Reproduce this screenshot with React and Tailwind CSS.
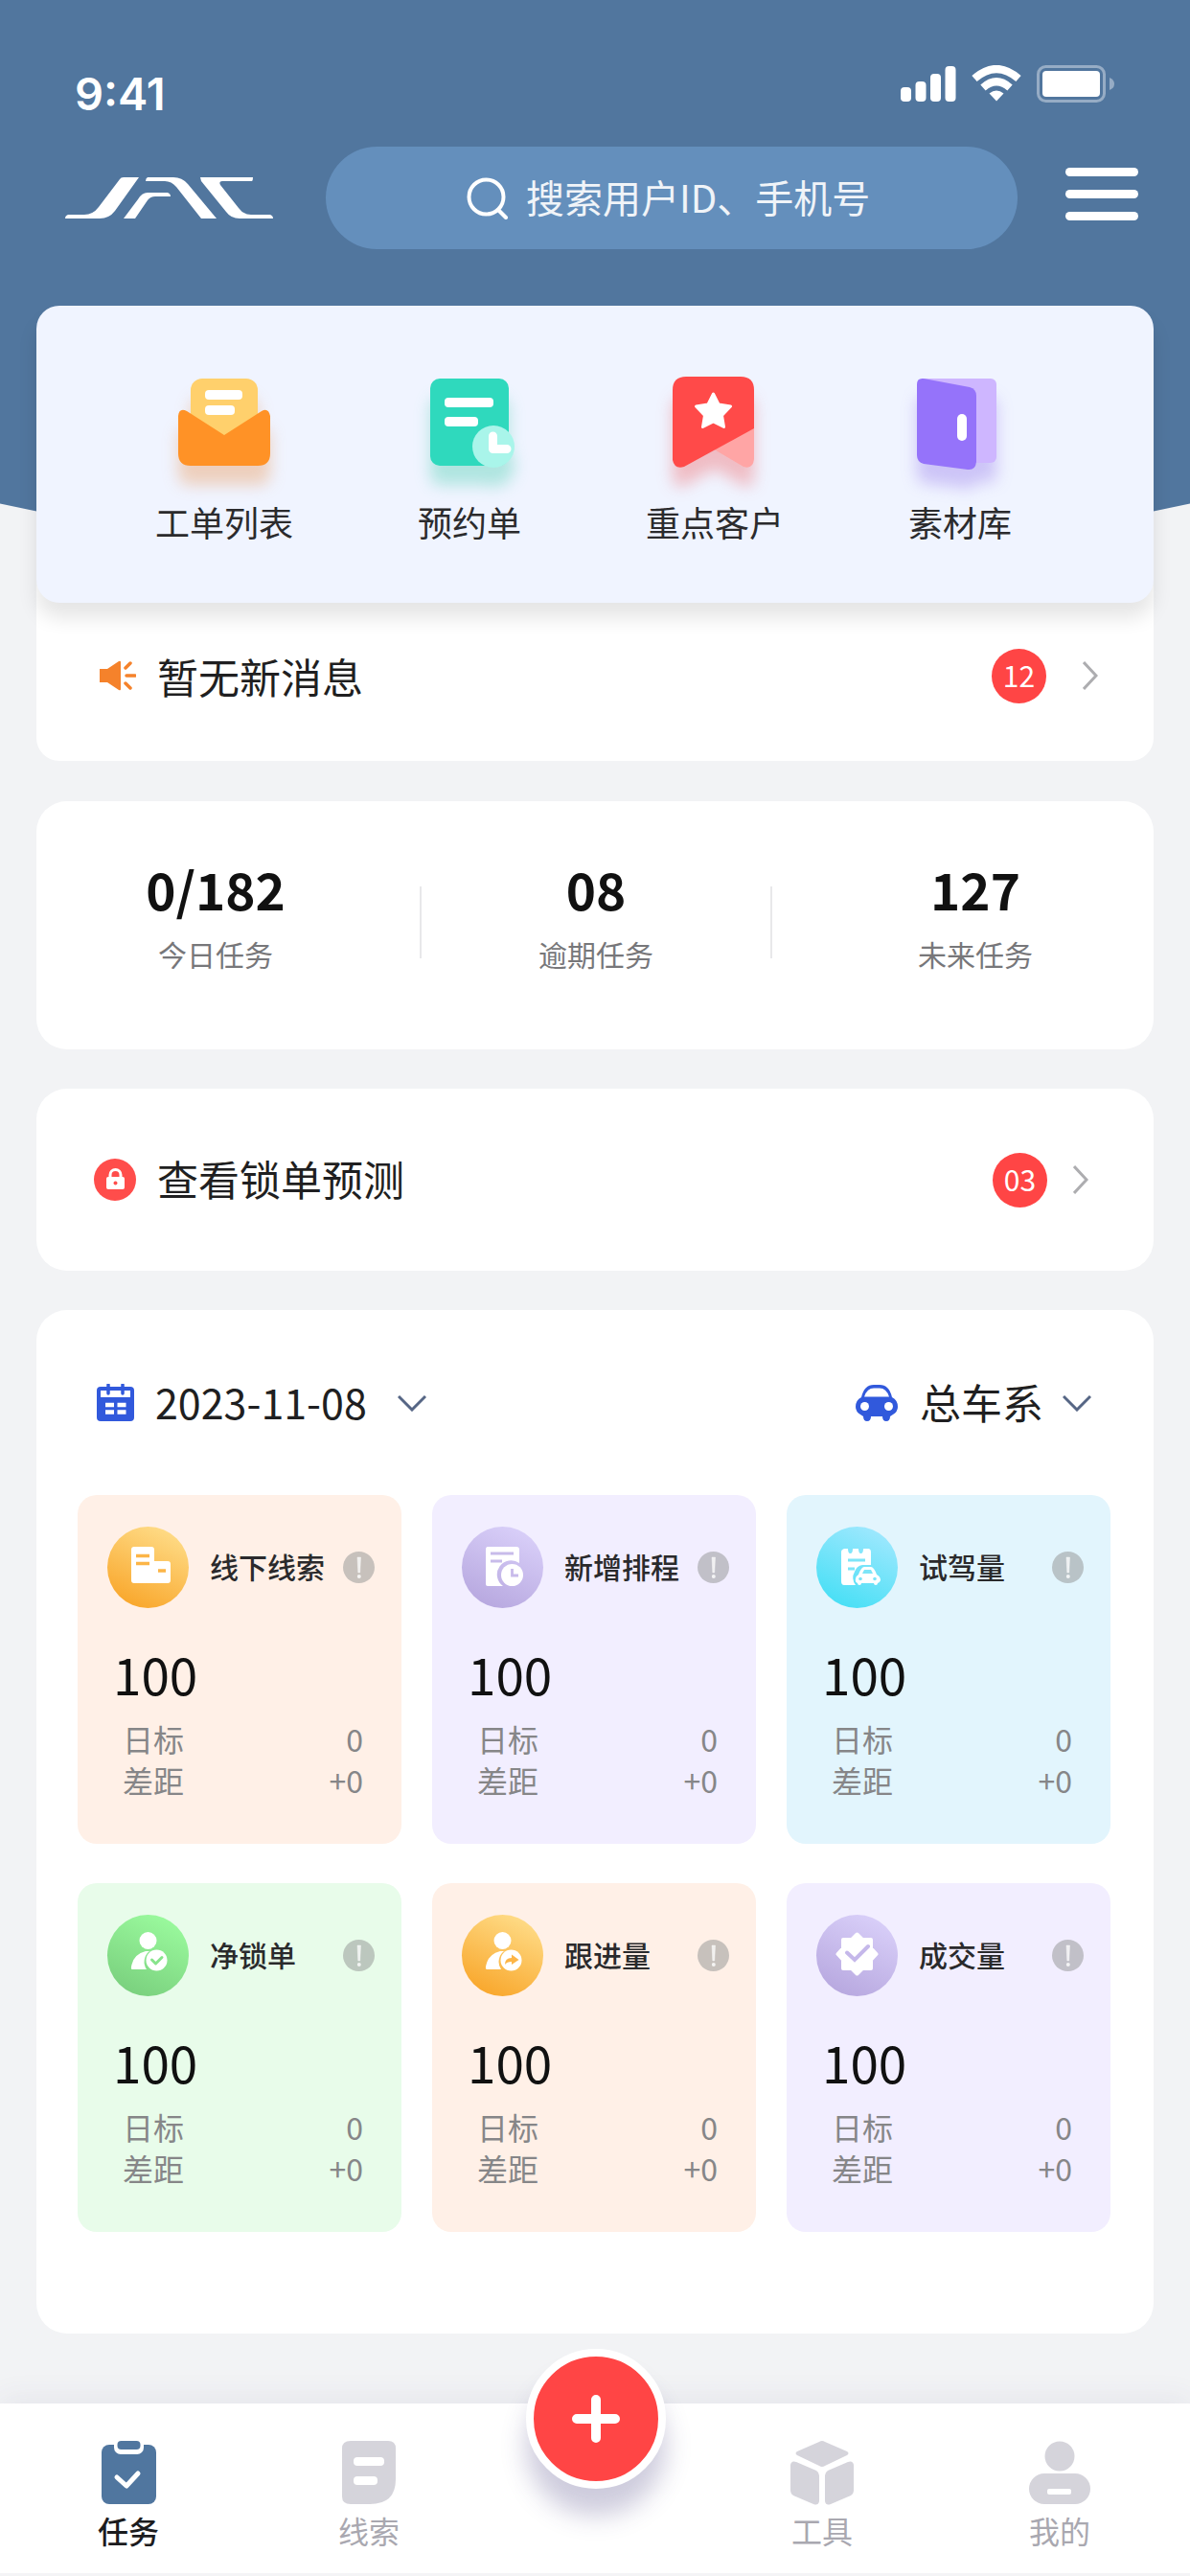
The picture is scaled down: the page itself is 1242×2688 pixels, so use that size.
import React from "react";

const fontStack = "font-['Noto_Sans_CJK_SC','Noto_Sans',sans-serif]";

function SignalIcon() {
  return (
    <svg width="58" height="38" viewBox="0 0 58 38" fill="#fff" aria-hidden="true">
      <rect x="0" y="23" width="11" height="15" rx="4" />
      <rect x="15.500" y="17" width="11" height="21" rx="4" />
      <rect x="31" y="9" width="11" height="29" rx="4" />
      <rect x="46.500" y="1" width="11" height="37" rx="4" />
    </svg>
  );
}

function WifiIcon() {
  return (
    <svg width="52" height="38" viewBox="0 0 52 38" fill="none" stroke="#fff" aria-hidden="true">
      <path d="M3 14Q26 -6 49 14" strokeWidth="8" />
      <path d="M12 23.500Q26 11 40 23.500" strokeWidth="8" />
      <path d="M18.500 29.500Q26 23.500 33.500 29.500L26 37.500Z" fill="#fff" stroke="none" />
    </svg>
  );
}

function BatteryIcon() {
  return (
    <svg width="82" height="40" viewBox="0 0 82 40" fill="none" aria-hidden="true">
      <rect x="1.500" y="1.500" width="69" height="36" rx="8" stroke="#fff" strokeOpacity=".4" strokeWidth="3" />
      <rect x="6" y="6" width="60" height="27" rx="4" fill="#fff" />
      <path d="M76 13Q81 15 81 19.500T76 26Z" fill="#fff" fillOpacity=".4" />
    </svg>
  );
}

function Logo() {
  return (
    <svg width="217" height="44" viewBox="0 0 217 44" fill="#fff" role="img" aria-label="JAC">
      <path d="M61 0H77L52 35Q46 43 36 43H0Q0 40 3 39H20Q29 39 35 31L57 2Q58 0 61 0Z" />
      <path d="M86 0H113Q122 0 128 7L158 43H142L116 10Q111 4 104 4H84Q84 1 86 0Z" />
      <path d="M61 43L76 23Q80 16 86 16H107Q110 17 110 20H94Q89 20 86 24L73 43Z" />
      <path d="M141 0H196Q196 3 195 4H164Q160 4 162 8L181 32Q186 39 194 39H214Q217 40 217 43H182Q173 43 168 36L142 4Z" />
    </svg>
  );
}

function SearchIcon() {
  return (
    <svg width="44" height="44" viewBox="0 0 44 44" fill="none" stroke="#fff" strokeWidth="4" strokeLinecap="round" aria-hidden="true">
      <circle cx="20.500" cy="20.500" r="18" />
      <path d="M33 34L41 42" />
    </svg>
  );
}

function EnvelopeIcon() {
  return (
    <svg width="96" height="96" viewBox="0 0 96 96" className="overflow-visible drop-shadow-[0_20px_8px_rgba(232,130,50,0.32)]" aria-hidden="true">
      <rect x="13" y="2" width="70" height="72" rx="12" fill="#ffd06c" />
      <path d="M0 41Q1 32 9 36L48 61L87 36Q94 32 96 41V80Q96 93 83 93H13Q0 93 0 80Z" fill="#ff9226" />
      <rect x="28" y="14" width="39" height="10" rx="4" fill="#fff" />
      <rect x="28" y="30" width="31" height="10" rx="4" fill="#fff" />
    </svg>
  );
}

function BookingIcon() {
  return (
    <svg width="94" height="96" viewBox="-6 0 94 96" className="overflow-visible drop-shadow-[0_20px_8px_rgba(40,200,160,0.32)]" aria-hidden="true">
      <rect x="0" y="2" width="82" height="91" rx="10" fill="#2fd9bd" />
      <rect x="15" y="22" width="51" height="10" rx="4" fill="#fff" />
      <rect x="15" y="42" width="35" height="10" rx="4" fill="#fff" />
      <circle cx="66" cy="73" r="22" fill="#a9f5ea" />
      <path d="M65.500 62V75.500H80" fill="none" stroke="#fff" strokeWidth="9" strokeLinecap="round" strokeLinejoin="round" />
    </svg>
  );
}

function BookmarkIcon() {
  return (
    <svg width="89" height="96" viewBox="0 0 89 96" className="overflow-visible drop-shadow-[0_20px_8px_rgba(240,70,70,0.32)]" aria-hidden="true">
      <path d="M40 74L85 50V86Q84 97 74 94Z" fill="#ffa5a5" />
      <path d="M0 14Q0 0 14 0H71Q85 0 85 14V54L12 94Q2 97 0 87Z" fill="#ff4a49" />
      <path d="M42.500 18L48 29L60.500 31L51.500 40.500L53.500 52.500L42.500 47L31.500 52.500L33.500 40.500L24.500 31L37 29Z" fill="#fff" stroke="#fff" strokeWidth="3" strokeLinejoin="round" />
    </svg>
  );
}

function DoorIcon() {
  return (
    <svg width="90" height="96" viewBox="0 0 90 96" className="overflow-visible drop-shadow-[0_20px_8px_rgba(130,95,230,0.32)]" aria-hidden="true">
      <rect x="2" y="2" width="81" height="88" rx="6" fill="#ceb6ff" />
      <path d="M0 8Q0 1 7 2L55 11Q62 13 62 20V89Q61 98 53 97L7 91Q0 89 0 82Z" fill="#9573fa" />
      <rect x="42" y="39" width="10" height="28" rx="5" fill="#fff" />
    </svg>
  );
}

function HornIcon() {
  return (
    <svg width="38" height="32" viewBox="0 0 38 32" aria-hidden="true">
      <path d="M0 9H8L20 1Q22 0 22 2V30Q22 32 20 31L8 23H0Z" fill="#f5822b" />
      <path d="M27 8L32 3M28 16H37M27 24L32 29" stroke="#f5822b" strokeWidth="3.500" strokeLinecap="round" />
    </svg>
  );
}

function LockIcon() {
  return (
    <svg width="44" height="44" viewBox="0 0 44 44" fill="none" aria-hidden="true">
      <circle cx="22" cy="22" r="22" fill="#ff4d4b" />
      <rect x="13" y="19" width="19" height="13" rx="2" fill="#fff" />
      <path d="M17 20V17A5.500 5.500 0 0 1 28 17V20" stroke="#fff" strokeWidth="3" />
      <circle cx="22.500" cy="25.500" r="2" fill="#ff4d4b" />
    </svg>
  );
}

function ChevronRight() {
  return (
    <svg width="16" height="30" viewBox="0 0 16 30" fill="none" stroke="#adadb0" strokeWidth="3" aria-hidden="true">
      <path d="M1 1L14 15L1 29" />
    </svg>
  );
}

function ChevronDown() {
  return (
    <svg width="30" height="18" viewBox="0 0 30 18" fill="none" stroke="#566685" strokeWidth="3" aria-hidden="true">
      <path d="M1 2L15 16L29 2" />
    </svg>
  );
}

function CalendarIcon() {
  return (
    <svg width="40" height="40" viewBox="0 0 40 40" aria-hidden="true">
      <rect x="0" y="3" width="39" height="36" rx="4" fill="#3159dc" />
      <rect x="4" y="7" width="31" height="7" fill="#fff" />
      <path d="M12 1V10M27 1V10" stroke="#3159dc" strokeWidth="3.500" strokeLinecap="round" />
      <path d="M9 22H18M21.500 22H30.500M9 29.500H18M21.500 29.500H30.500" stroke="#fff" strokeWidth="4.500" />
    </svg>
  );
}

function CarIcon() {
  return (
    <svg width="44" height="38" viewBox="0 0 44 38" aria-hidden="true">
      <path d="M6 13Q9 0 19 0H25Q35 0 38 13Q44 16 44 23Q44 28 39 31L36 33Q36 38 32 38Q28 38 28 33H16Q16 38 12 38Q8 38 8 33L5 31Q0 28 0 23Q0 16 6 13Z" fill="#3159dc" />
      <path d="M9 12.500Q12 3.500 19 3.500H25Q32 3.500 35 12.500Z" fill="#fff" />
      <circle cx="9.500" cy="22.500" r="4.500" fill="#fff" />
      <circle cx="34.500" cy="22.500" r="4.500" fill="#fff" />
    </svg>
  );
}

function BuildingGlyph() {
  return (
    <>
      <path d="M28 21H46Q49 21 49 24V36H63Q66 36 66 39V56Q66 59 63 59H28Q25 59 25 56V24Q25 21 28 21Z" fill="#fff" />
      <path d="M30 30.500H44M30 38.500H44M53 46H61" stroke="#fcb547" strokeWidth="3.500" />
    </>
  );
}

function ScheduleGlyph() {
  return (
    <>
      <path d="M27 21H57Q60 21 60 24V38A14.500 14.500 0 0 0 43 62H27Q25 62 25 60V24Q25 21 27 21Z" fill="#fff" />
      <path d="M30 28H54M30 36H42" stroke="#c8bbea" strokeWidth="3" />
      <circle cx="52.500" cy="50.500" r="11.500" fill="#fff" />
      <path d="M52.500 44V51H59" fill="none" stroke="#c8bbea" strokeWidth="2.800" />
    </>
  );
}

function TestDriveGlyph() {
  return (
    <>
      <path d="M29 23H33Q33 28 35.500 28T38 23H44Q44 28 46.500 28T49 23H55Q57 24 57 26V40H48Q42 41 40 47Q36 54 41 61H29Q26 61 26 57V26Q26 24 29 23Z" fill="#fff" />
      <path d="M33 35H51M33 44H40" stroke="#7de5f8" strokeWidth="3" />
      <path d="M44 50Q47 42 50 42H57Q60 42 63 50Q67 52 67 56Q66 59 64 59Q64 61 62 61T60 59H47Q47 61 45 61T43 59Q40 58 41 54Q41 52 44 50Z" fill="#fff" />
      <path d="M48 49L50 45H57L59 49Z" fill="#7de5f8" />
      <circle cx="46" cy="54.500" r="1.800" fill="#7de5f8" />
      <circle cx="61" cy="54.500" r="1.800" fill="#7de5f8" />
    </>
  );
}

function PersonGlyph() {
  return (
    <>
      <ellipse cx="42.500" cy="27" rx="9" ry="9" fill="#fff" />
      <path d="M26 57Q24 57 25.500 52Q28 41 40 38H44A14 14 0 0 0 41 57Z" fill="#fff" />
      <circle cx="51.500" cy="47.500" r="11" fill="#fff" />
    </>
  );
}

function LockedOrderGlyph() {
  return (
    <>
      <PersonGlyph />
      <path d="M46.500 47L50.500 51L57 44.500" fill="none" stroke="#88e48c" strokeWidth="3" strokeLinecap="round" strokeLinejoin="round" />
    </>
  );
}

function FollowUpGlyph() {
  return (
    <>
      <PersonGlyph />
      <path d="M45 52Q45 45 52 45V41.500L59.500 47L52 52V49Q47 49 45 52Z" fill="#fcb547" />
    </>
  );
}

function DealGlyph() {
  return (
    <>
      <path
        d="M42.500 20.500L48 26H57V35L62.500 41L57 47V56H48L42.500 61.500L37 56H28V47L22.500 41L28 35V26H37Z"
        fill="#fff" stroke="#fff" strokeWidth="4" strokeLinejoin="round"
      />
      <path d="M32 39.500L40 47L54 33" fill="none" stroke="#c5b8ea" strokeWidth="4" strokeLinecap="round" />
    </>
  );
}

function InfoIcon() {
  return (
    <svg width="33" height="33" viewBox="0 0 33 33" aria-hidden="true">
      <circle cx="16.500" cy="16.500" r="16.500" fill="#909191" fillOpacity=".5" />
      <path d="M15 6H18.500L17.700 22H15.800Z" fill="#fff" fillOpacity=".75" stroke="#fff" strokeOpacity=".4" />
      <circle cx="16.800" cy="26" r="2" fill="#fff" fillOpacity=".8" />
    </svg>
  );
}

function TaskIcon() {
  return (
    <svg width="66" height="67" viewBox="0 0 66 67" fill="none" aria-hidden="true">
      <rect x="5" y="4" width="57" height="62" rx="8" fill="#50769f" />
      <rect x="18" y="-4" width="31" height="18" rx="7" fill="#fff" />
      <rect x="21.500" y="0" width="24" height="9" rx="4" fill="#50769f" />
      <path d="M21 38L31 47L43 34" stroke="#fff" strokeWidth="5" strokeLinecap="round" strokeLinejoin="round" />
    </svg>
  );
}

function LeadIcon() {
  return (
    <svg width="66" height="67" viewBox="0 0 66 67" aria-hidden="true">
      <path d="M14 0H53Q61 0 61 8V40Q61 66 34 66H14Q5 66 5 58V8Q5 0 14 0Z" fill="#d5d4db" />
      <rect x="17" y="17" width="32" height="9" rx="4" fill="#fff" />
      <rect x="17" y="37" width="25" height="9" rx="4" fill="#fff" />
    </svg>
  );
}

function ToolIcon() {
  return (
    <svg width="66" height="67" viewBox="0 0 66 67" fill="#d5d4db" aria-hidden="true">
      <path d="M30 1Q33 -1 36 1L59 11Q62 13 59 15L36 26Q33 28 30 26L7 15Q4 13 7 11Z" />
      <path d="M0 25Q1 20 6 22L27 31Q30 33 30 36V63Q29 68 24 66L3 57Q0 55 0 52Z" />
      <path d="M66 25Q65 20 60 22L39 31Q36 33 36 36V63Q37 68 42 66L63 57Q66 55 66 52Z" />
    </svg>
  );
}

function ProfileIcon() {
  return (
    <svg width="66" height="67" viewBox="0 0 66 67" fill="#d5d4db" aria-hidden="true">
      <circle cx="33" cy="16" r="15.500" />
      <rect x="1" y="34" width="64" height="32" rx="16" />
      <rect x="20" y="50" width="25" height="6" rx="2" fill="#fff" />
    </svg>
  );
}

const shortcuts = [
  { label: "工单列表", Icon: EnvelopeIcon },
  { label: "预约单", Icon: BookingIcon },
  { label: "重点客户", Icon: BookmarkIcon },
  { label: "素材库", Icon: DoorIcon },
];

const orange = { tile: "bg-[#fff0e7]", disc: "bg-linear-[25deg,#f8a020,#ffe292]" };
const purple = { tile: "bg-[#f2eeff]", disc: "bg-linear-[25deg,#b3a3dc,#ddd4fc]" };
const cyan = { tile: "bg-[#e2f5fd]", disc: "bg-linear-[25deg,#3cdef4,#a9e9ff]" };
const green = { tile: "bg-[#e8fcea]", disc: "bg-linear-[25deg,#76cb7a,#9effa1]" };

const metrics = [
  { name: "线下线索", tone: orange, Glyph: BuildingGlyph },
  { name: "新增排程", tone: purple, Glyph: ScheduleGlyph },
  { name: "试驾量", tone: cyan, Glyph: TestDriveGlyph },
  { name: "净锁单", tone: green, Glyph: LockedOrderGlyph },
  { name: "跟进量", tone: orange, Glyph: FollowUpGlyph },
  { name: "成交量", tone: purple, Glyph: DealGlyph },
];

function Badge({ children }) {
  return (
    <span className="flex size-[57px] items-center justify-center rounded-full bg-[#ff4545] pb-0.5 text-[30px] leading-none text-white">
      {children}
    </span>
  );
}

function Stat({ value, label, className = "" }) {
  return (
    <div className={"flex justify-center " + className}>
      <div className="flex flex-col items-center">
        <strong className="text-[53px] leading-[60px] font-bold text-[#111]">{value}</strong>
        <span className="mt-[18px] text-[30px] leading-[40px] text-[#77777a]">{label}</span>
      </div>
    </div>
  );
}

function MetricTile({ name, tone, Glyph }) {
  return (
    <article className={"rounded-[20px] pt-[33px] pr-7 pb-[45px] pl-[31px] " + tone.tile}>
      <header className="flex items-center">
        <span className={"size-[85px] rounded-full " + tone.disc}>
          <svg width="85" height="85" viewBox="0 0 85 85" aria-hidden="true">
            <Glyph />
          </svg>
        </span>
        <h3 className="ml-[22px] pb-1 text-[30px] leading-[40px] font-medium whitespace-nowrap text-[#2a2a2c]">{name}</h3>
        <button type="button" aria-label={name + "说明"} className="ml-auto">
          <InfoIcon />
        </button>
      </header>
      <p className="mt-[38px] pl-1.5 text-[53px] leading-[60px] text-[#111]">100</p>
      <dl className="mt-[17px] grid grid-cols-2 pr-3 pl-4 text-[32px] leading-[43px] text-[#868688]">
        <dt>日标</dt>
        <dd className="text-right">0</dd>
        <dt>差距</dt>
        <dd className="text-right">+0</dd>
      </dl>
    </article>
  );
}

function Tab({ label, Icon, active }) {
  return (
    <a href="#" aria-current={active ? "page" : undefined} className="flex flex-col items-center">
      <Icon />
      <span
        className={
          "mt-[5px] text-[32px] leading-[42px] whitespace-nowrap " +
          (active ? "font-medium text-[#1c1c1e]" : "text-[#a9a8b0]")
        }
      >
        {label}
      </span>
    </a>
  );
}

export default function App() {
  return (
    <div className={"relative isolate flex min-h-screen flex-col bg-[#f2f3f5] text-[#1f1f21] " + fontStack}>
      <div className="absolute inset-x-0 top-0 -z-10 h-[590px] bg-[#51769e] [clip-path:ellipse(110%_100%_at_50%_0)]" />

      <div className="flex h-[153px] items-start justify-between pt-[68px] pr-[78px] pl-[78px]">
        <time className="font-['Inter',sans-serif] text-[47px] leading-[60px] font-semibold text-white">9:41</time>
        <div className="flex gap-4">
          <SignalIcon />
          <WifiIcon />
          <BatteryIcon />
        </div>
      </div>

      <header className="flex items-center pr-[54px] pl-[68px]">
        <Logo />
        <label className="ml-[55px] flex h-[107px] flex-1 items-center justify-center gap-[18px] rounded-full bg-[#648fbc]">
          <SearchIcon />
          <input
            type="text"
            aria-label="搜索"
            placeholder="搜索用户ID、手机号"
            className="w-[366px] bg-transparent pb-1 text-[40px] leading-[60px] text-white outline-none placeholder:text-white/90"
          />
        </label>
        <button type="button" aria-label="菜单" className="ml-[50px] flex w-[76px] flex-col gap-3.5 pb-2">
          <span className="h-[9px] w-full rounded-full bg-white" />
          <span className="h-[9px] w-full rounded-full bg-white" />
          <span className="h-[9px] w-full rounded-full bg-white" />
        </button>
      </header>

      <main className="mx-[38px] mt-[59px]">
        <nav
          aria-label="快捷入口"
          className="relative z-10 grid grid-cols-4 rounded-[24px] bg-[#f0f4ff] pt-[74px] pr-[74px] pb-[58px] pl-[68px] shadow-[0_16px_20px_rgba(0,0,0,0.1)]"
        >
          {shortcuts.map(({ label, Icon }) => (
            <a key={label} href="#" className="flex flex-col items-center">
              <Icon />
              <span className="mt-7 text-[36px] leading-[54px] text-[#2b2b2d]">{label}</span>
            </a>
          ))}
        </nav>

        <a href="#" className="-mt-10 flex items-center rounded-[24px] bg-white pt-[87px] pr-[58px] pb-[60px] pl-[66px]">
          <HornIcon />
          <span className="ml-[22px] text-[43px] leading-[58px]">暂无新消息</span>
          <span className="ml-auto flex items-center gap-[38px]">
            <Badge>12</Badge>
            <ChevronRight />
          </span>
        </a>

        <section className="mt-[42px] grid grid-cols-[400fr_2px_364fr_2px_398fr] rounded-[32px] bg-white pt-[61px] pb-20">
          <Stat value="0/182" label="今日任务" className="pr-[26px]" />
          <div className="mt-7 h-[75px] bg-[#e8e8ea]" />
          <Stat value="08" label="逾期任务" />
          <div className="mt-7 h-[75px] bg-[#e8e8ea]" />
          <Stat value="127" label="未来任务" className="pl-[26px]" />
        </section>

        <a href="#" className="mt-[41px] flex items-center rounded-[32px] bg-white py-[66px] pr-[68px] pl-[60px]">
          <LockIcon />
          <span className="ml-[22px] pb-1 text-[43px] leading-[54px]">查看锁单预测</span>
          <span className="ml-auto flex items-center gap-[27px]">
            <Badge>03</Badge>
            <ChevronRight />
          </span>
        </a>

        <section className="mt-[41px] rounded-[32px] bg-white pt-[67px] pr-[45px] pb-[106px] pl-[43px]">
          <div className="flex items-center justify-between pr-5 pl-5">
            <label className="flex items-center">
              <CalendarIcon />
              <select aria-label="日期" className="ml-[21px] appearance-none bg-transparent pb-1 text-[43px] leading-[56px] outline-none">
                <option>2023-11-08</option>
              </select>
              <span className="ml-8">
                <ChevronDown />
              </span>
            </label>
            <label className="flex items-center">
              <CarIcon />
              <select aria-label="车系" className="ml-[23px] appearance-none bg-transparent pb-1 text-[43px] leading-[56px] outline-none">
                <option>总车系</option>
              </select>
              <span className="ml-5">
                <ChevronDown />
              </span>
            </label>
          </div>
          <div className="mt-[66px] grid grid-cols-3 gap-x-8 gap-y-[41px]">
            {metrics.map((m) => (
              <MetricTile key={m.name} {...m} />
            ))}
          </div>
        </section>
      </main>

      <nav
        aria-label="主导航"
        className="mt-auto flex items-start justify-between border-b-3 border-[#f4f4f6] bg-white pt-[39px] pr-[103px] pb-6 pl-[101px] shadow-[0_-4px_30px_rgba(60,70,120,0.08)]"
      >
        <div className="flex gap-[185px]">
          <Tab label="任务" Icon={TaskIcon} active />
          <Tab label="线索" Icon={LeadIcon} />
        </div>
        <button
          type="button"
          aria-label="新建"
          className="-mt-24 flex size-[146px] items-center justify-center rounded-full border-8 border-white bg-[#ff4545] shadow-[0_28px_26px_rgba(60,50,120,0.25)]"
        >
          <svg width="52" height="52" viewBox="0 0 52 52" stroke="#fff" strokeWidth="10" strokeLinecap="round" aria-hidden="true">
            <path d="M26 6V46M6 26H46" />
          </svg>
        </button>
        <div className="flex gap-[182px]">
          <Tab label="工具" Icon={ToolIcon} />
          <Tab label="我的" Icon={ProfileIcon} />
        </div>
      </nav>
    </div>
  );
}
